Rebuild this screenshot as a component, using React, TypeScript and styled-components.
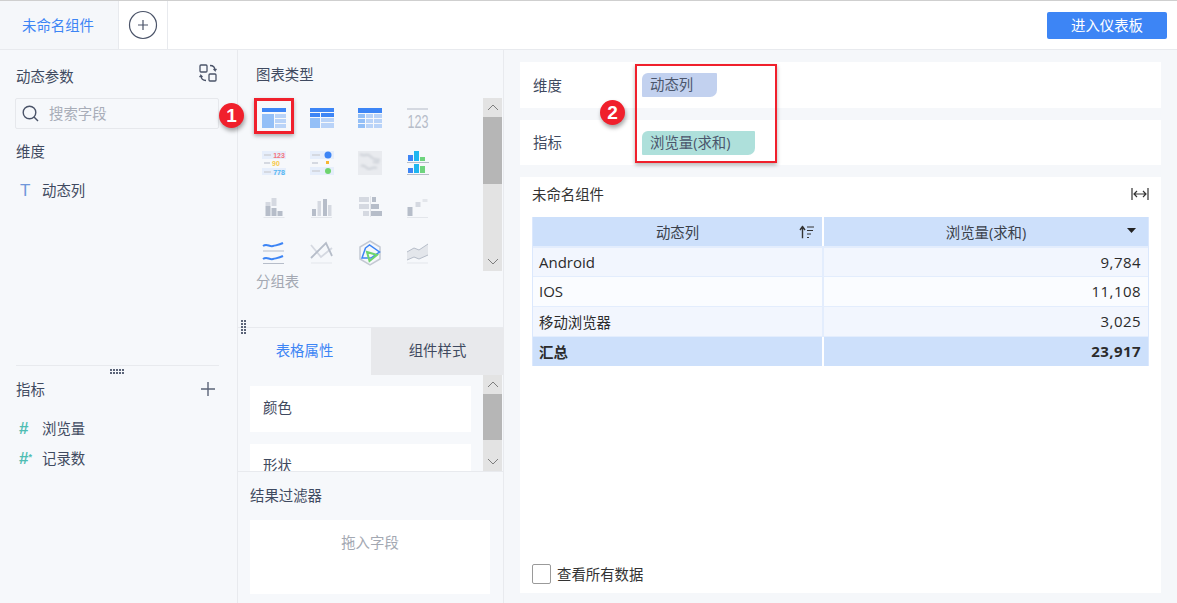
import React from "react";
import styled, { createGlobalStyle } from "styled-components";

const Global = createGlobalStyle`
  html, body { margin: 0; padding: 0; background: #fff; }
  body { font-family: "Open Sans", "Noto Sans CJK SC", sans-serif; color: #3f4a60; font-size: 14.4px; }
  * { box-sizing: border-box; }
`;

const Page = styled.div`position: relative; width: 1177px; height: 603px; overflow: hidden; display: flex; flex-direction: column;`;
const TopBar = styled.header`height: 50px; flex: none; display: flex; align-items: stretch; border-top: 1px solid #cfcfcf; border-bottom: 1px solid #e8eaee; background: #fff;`;
const ActiveTab = styled.div`width: 118px; background: #f5f7fa; color: #3d85f5; display: flex; align-items: center; justify-content: center; padding: 0 2px 2px 0;`;
const PlusTab = styled.div`width: 50px; border-left: 1px solid #e8eaee; border-right: 1px solid #e8eaee; display: flex; align-items: center; justify-content: center;`;
const EnterButton = styled.button`margin: 11px 10px 10px auto; width: 120px; border: 0; border-radius: 2px; background: #3d85f5; color: #fff; font: inherit; padding: 0 0 2px;`;
const Body = styled.div`flex: 1; display: flex; min-height: 0;`;

const LeftPanel = styled.aside`width: 238px; flex: none; background: #f6f8fb; border-right: 1px solid #e8eaee; padding: 0 18px 0 16px; display: flex; flex-direction: column;`;
const PanelHead = styled.div<{ $h: number }>`height: ${p => p.$h}px; flex: none; display: flex; align-items: center; justify-content: space-between; color: #3f4a60; padding-bottom: 2px;`;
const ParamHead = styled(PanelHead)`padding-top: 5px;`;
const SearchBox = styled.div`height: 31px; margin-left: -1px; border: 1px solid #e6e8ec; border-radius: 2px; display: flex; align-items: center; gap: 10px; padding: 0 0 3px 6px; color: #a8adb8; flex: none;`;
const FieldRow = styled.div`height: 30px; flex: none; display: flex; align-items: center; color: #3f4a60; padding-bottom: 2px;`;
const FieldIcon = styled.span<{ $c: string; $bold?: boolean }>`width: 26px; padding: 2px 0 0 ${p => (p.$bold ? 3 : 4)}px; flex: none; color: ${p => p.$c}; font-weight: ${p => (p.$bold ? 700 : 400)}; font-size: 17px; line-height: 1; font-family: "Liberation Sans", sans-serif; white-space: nowrap;`;
const StarMark = styled.small`font-size: 9px; vertical-align: 4px;`;
const Spacer = styled.div<{ $h: number }>`height: ${p => p.$h}px; flex: none;`;
const Divider = styled.div`height: 1px; background: #e8eaee; flex: none;`;
const Dots = styled.div`height: 11px; flex: none; display: flex; align-items: center; justify-content: center;`;

const MiddlePanel = styled.section`width: 266px; flex: none; background: #f6f8fb; border-right: 1px solid #e8eaee; display: flex; flex-direction: column; position: relative;`;
const ChartSection = styled.div`height: 277px; flex: none; padding: 0 1px 0 12px; display: flex; flex-direction: column;`;
const ChartTitle = styled.div`height: 48px; flex: none; display: flex; align-items: center; padding: 0 0 1px 6px; color: #3f4a60;`;
const ChartRow = styled.div`display: flex; justify-content: space-between;`;
const ChartWrap = styled.div`flex: 1; position: relative; width: 100%;`;
const ChartGrid = styled.div`display: grid; grid-template-columns: repeat(4, 48px); grid-auto-rows: 45px; width: 192px; margin-top: -3px;`;
const ChartCell = styled.div`display: flex; align-items: center; justify-content: center;`;
const ChartIconSvg = styled.svg`overflow: visible;`;
const ChartName = styled.div`padding-left: 6px; color: #a3a8b2; margin-top: -5px;`;
const Scrollbar = styled.div<{ $h: number }>`width: 19px; height: ${p => p.$h}px; background: #e3e3e3; flex: none; display: flex; flex-direction: column; justify-content: space-between;`;
const ScrollCap = styled.div`height: 19px; display: flex; align-items: center; justify-content: center; flex: none;`;
const Thumb = styled.div<{ $h: number }>`height: ${p => p.$h}px; background: #b6b6b6; flex: none;`;
const ScrollTrack = styled.div`flex: 1; display: flex; flex-direction: column;`;
const Selected = styled.div`position: absolute; left: 4px; top: 0; width: 40px; height: 36px; border: 3px solid #f0202c; box-shadow: 0 2px 4px rgba(0,0,0,.3);`;
const TabStrip = styled.div`height: 48px; flex: none; display: flex; border-top: 1px solid #e8eaee;`;
const Tab = styled.div<{ $on?: boolean }>`width: 133px; flex: none; display: flex; align-items: center; justify-content: center; padding-bottom: 4px; background: ${p => (p.$on ? "#f6f8fb" : "#e8e9ec")}; color: ${p => (p.$on ? "#3d85f5" : "#3f4a60")};`;
const AttrArea = styled.div`height: 97px; flex: none; display: flex; overflow: hidden; padding-left: 12px; border-bottom: 1px solid #e8eaee;`;
const AttrList = styled.div`width: 221px; flex: none; padding-top: 11px; display: flex; flex-direction: column; gap: 12px;`;
const AttrCard = styled.div`height: 46px; flex: none; background: #fff; display: flex; align-items: center; padding: 0 0 5px 13px; color: #3f4a60;`;
const AttrGap = styled.div`width: 12px; flex: none;`;
const FilterArea = styled.div`flex: 1; padding: 0 12px; display: flex; flex-direction: column;`;
const FilterTitle = styled.div`height: 48px; flex: none; display: flex; align-items: center; padding-bottom: 4px; color: #3f4a60;`;
const DropZone = styled.div`height: 74px; width: 240px; background: #fff; color: #a3a8b2; text-align: center; padding-top: 11px;`;
const GripV = styled.div`position: absolute; left: 3px; top: 270px;`;

const RightPanel = styled.main`flex: 1; background: #f5f7fa; padding: 12px 16px 10px 16px; display: flex; flex-direction: column; gap: 12px;`;
const ShelfCard = styled.div<{ $h: number }>`height: ${p => p.$h}px; flex: none; background: #fff; display: flex; align-items: center; padding-left: 13px; color: #3f4a60;`;
const ShelfLabel = styled.div`width: 109px; flex: none; padding-bottom: 2px;`;
const Pill = styled.div<{ $w: number; $c: string }>`width: ${p => p.$w}px; height: 24px; background: ${p => p.$c}; border-radius: 6px 1px 7px 1px; padding: 0 0 3px 8px; display: flex; align-items: center; color: #4b566c;`;
const MainCard = styled.div`flex: 1; background: #fff; padding: 0 12px; display: flex; flex-direction: column; color: #333;`;
const MainHead = styled.div`height: 40px; flex: none; display: flex; align-items: center; justify-content: space-between; padding-bottom: 7px;`;
const DataTable = styled.div`background: #dbe8fd; padding: 0 1px; display: flex; flex-direction: column; width: 617px;`;
const Row = styled.div<{ $bg: string; $gap: string; $h: number; $bold?: boolean }>`display: grid; grid-template-columns: 289px 1fr; column-gap: 2px; height: ${p => p.$h}px; background: ${p => p.$gap}; font-weight: ${p => (p.$bold ? 700 : 400)}; font-size: 15px; color: #2b2b2b; & > div { background: ${p => p.$bg}; }`;
const RowGap = styled.div<{ $h: number }>`height: ${p => p.$h}px; background: #e3edfd;`;
const Cell = styled.div<{ $right?: boolean; $cjk?: boolean }>`display: flex; align-items: center; padding: 0 7px 1px 6px; font-size: ${p => (p.$cjk ? 14.4 : 15)}px; letter-spacing: ${p => (p.$right ? 0.45 : 0)}px; justify-content: ${p => (p.$right ? "flex-end" : "flex-start")};`;
const HeadCell = styled.div`position: relative; display: flex; align-items: center; justify-content: center; font-size: 14.4px; color: #3a3f4a;`;
const SortIcon = styled.span`position: absolute; right: 8px; top: 50%; transform: translateY(-50%); display: flex;`;
const CheckRow = styled.div`margin-top: auto; height: 29px; flex: none; display: flex; align-items: flex-start; gap: 6px; color: #333;`;
const Check = styled.span`width: 19px; height: 20px; border: 1px solid #9a9a9a; border-radius: 2px; background: #fff; flex: none;`;
const CheckText = styled.span`margin-top: -1px;`;

const Badge = styled.div<{ $x: number; $y: number }>`position: absolute; left: ${p => p.$x}px; top: ${p => p.$y}px; width: 25px; height: 25px; border-radius: 50%; background: #f0202c; color: #fff; font: 700 19px/25px "Liberation Sans", sans-serif; text-align: center; box-shadow: 1px 3px 4px rgba(0,0,0,.35);`;
const RedFrame = styled.div`position: absolute; left: 635px; top: 64px; width: 142px; height: 99px; border: 2px solid #f0202c; box-shadow: 0 2px 4px rgba(0,0,0,.3);`;

const B = "#3d85f5", L = "#93bff7", M = "#b9d3f8", G = "#b6bdc9", G2 = "#d5d9e1", G3 = "#e3e6eb";
const Ico: React.FC<{ children: React.ReactNode }> = ({ children }) => (
  <ChartIconSvg width="26" height="26" viewBox="0 0 26 26" fill="none">{children}</ChartIconSvg>
);
const r = (x: number, y: number, w: number, h: number, c: string) => <rect x={x} y={y} width={w} height={h} fill={c} />;
const SF = "Liberation Sans, sans-serif";

const icons: React.ReactNode[] = [
  <>{r(1,3,24,4,B)}{r(1,9,12,14,L)}{r(14,9,11,4,M)}{r(14,14,11,4,M)}{r(14,19,11,4,M)}</>,
  <>{r(1,3,24,4,B)}{r(1,8,10,4,B)}{r(12,8,13,4,B)}{r(1,13,10,10,L)}{r(12,13,13,4,M)}{r(12,18,13,5,M)}</>,
  <>{r(1,3,24,5,B)}{r(1,9,7,4,L)}{r(9,9,7,4,M)}{r(17,9,8,4,M)}{r(1,14,7,4,L)}{r(9,14,7,4,M)}{r(17,14,8,4,M)}{r(1,19,7,4,L)}{r(9,19,7,4,M)}{r(17,19,8,4,M)}</>,
  <>{r(2,3,21,2,G2)}<text x="2.500" y="23" textLength="21" lengthAdjust="spacingAndGlyphs" fontSize="19" fill={G} fontFamily={SF}>123</text></>,
  <>{r(1,1,24,8,"#e6eefb")}{r(3,4,7,2,G2)}<text x="18" y="8" textAnchor="middle" fontSize="7" fontWeight="700" fill="#f4737e" fontFamily={SF}>123</text>{r(3,12,6,2,G2)}<text x="15" y="16" textAnchor="middle" fontSize="7" fontWeight="700" fill="#f7c948" fontFamily={SF}>90</text>{r(1,18,24,7,"#e6eefb")}{r(3,21,7,2,G2)}<text x="18" y="24.500" textAnchor="middle" fontSize="7" fontWeight="700" fill="#52b5f2" fontFamily={SF}>778</text></>,
  <>{r(1,1,24,8,"#e6eefb")}{r(3,4,8,2,G2)}<circle cx="19" cy="5" r="3.500" fill={B} />{r(3,12,6,2,G2)}{r(17,11,3,3,"#f7b733")}{r(1,17,24,8,"#e6eefb")}{r(3,20,8,2,G2)}<circle cx="19" cy="21" r="3" fill="#6ed46e" /></>,
  <><defs><filter id="blotch"><feGaussianBlur stdDeviation="1" /></filter></defs><rect x="1" y="1" width="24" height="24" fill="#e9ebef" /><g filter="url(#blotch)" stroke="#cdd1d8" strokeWidth="2"><path d="M3 4c5 4 7-2 10 2s6 3 10 4" /><path d="M4 16c4-2 5 3 8 3s4-3 8-1" /><path d="M16 12c3 0 4 1 6 0" /></g></>,
  <>{r(3,5,5,6,B)}{r(9,1,5,10,"#1fb6f0")}{r(15,7,5,4,"#6ed47e")}{r(2,12,22,1,G)}{r(3,18,5,5,B)}{r(9,14,5,9,"#1fb6f0")}{r(15,16,5,7,"#6ed47e")}{r(2,24,22,1,G)}</>,
  <>{r(4.500,7,5,4,G2)}{r(4.500,11,5,10,G)}{r(10.500,3,5,8,G2)}{r(10.500,13,5,8,G)}{r(16.500,16,5,5,G)}{r(2.500,22,21,1,G3)}</>,
  <>{r(3,14,4,7,G)}{r(8.500,6,3.500,15,G2)}{r(14,4,4,17,G)}{r(19,10,3.500,11,G2)}{r(2,22,21,1,G3)}</>,
  <>{r(2,2,10,5,G2)}{r(15,2,4,5,G)}{r(2,9,10,5,G2)}{r(14,9,8,5,G)}{r(6,16,6,5,G2)}{r(14,16,11,5,G)}{r(13,1,1,21,G3)}</>,
  <>{r(2.500,12,5,9,G)}{r(10.500,7,5,5,G2)}{r(17.500,4,5,3,G3)}{r(2,22,21,1,G3)}</>,
  <><path d="M2 6c4-3 6 1 10 0s6-1 10-3" stroke={B} strokeWidth="2" /><path d="M2 11h21" stroke={G} strokeWidth="1" /><path d="M2 19c4-3 6 1 10 0s6-1 10-3" stroke={B} strokeWidth="2" /><path d="M2 23.500h21" stroke={G} strokeWidth="1" /></>,
  <><path d="M2 5l10 12 11-9" stroke={G2} strokeWidth="1.800" /><path d="M2 18L17 3l6 13" stroke={G} strokeWidth="1.800" /><path d="M2 23h21" stroke={G3} strokeWidth="1" /></>,
  <><path d="M13 1l10 6v12l-10 6-10-6V7z" stroke="#c4c9d3" strokeWidth="1.500" /><path d="M8.500 8l4-3 10 7-8.500 6H5z" stroke={B} strokeWidth="1.500" /><path d="M10 12l10 3-7.500 6z" stroke="#6ed46e" strokeWidth="2" /></>,
  <><path d="M2 12l7-4 5 2 9-6v11l-9 4-5-2-7 3z" fill={G3} /><path d="M2 12l7-4 5 2 9-6M2 20l7-3 5 2 9-4" stroke={G} strokeWidth="1" /><path d="M2 23h21" stroke={G3} strokeWidth="1" /></>,
];

const Chevron: React.FC<{ up?: boolean }> = ({ up }) => (
  <svg width="12" height="7" viewBox="0 0 12 7" fill="none"><path d={up ? "M1 6l5-5 5 5" : "M1 1l5 5 5-5"} stroke="#7d7d7d" strokeWidth="1" /></svg>
);
const VBar: React.FC<{ h: number; thumb: number }> = ({ h, thumb }) => (
  <Scrollbar $h={h}>
    <ScrollTrack>
      <ScrollCap><Chevron up /></ScrollCap>
      <Thumb $h={thumb} />
    </ScrollTrack>
    <ScrollCap><Chevron /></ScrollCap>
  </Scrollbar>
);
const GripDots: React.FC<{ w: number; h: number }> = ({ w, h }) => (
  <svg width={w * 3} height={h * 3} viewBox={`0 0 ${w * 3} ${h * 3}`}>
    {Array.from({ length: w * h }, (_, i) => (
      <rect key={i} x={(i % w) * 3} y={Math.floor(i / w) * 3} width="2" height="2" fill="#5b6478" />
    ))}
  </svg>
);

export default function App() {
  return (
    <Page>
      <Global />
      <TopBar>
        <ActiveTab>未命名组件</ActiveTab>
        <PlusTab>
          <svg width="30" height="30" viewBox="0 0 30 30" fill="none">
            <circle cx="15" cy="15" r="13.500" stroke="#4a5368" strokeWidth="1.200" />
            <path d="M15 10v10M10 15h10" stroke="#4a5368" strokeWidth="1.200" />
          </svg>
        </PlusTab>
        <EnterButton>进入仪表板</EnterButton>
      </TopBar>
      <Body>
        <LeftPanel>
          <ParamHead $h={48}>
            <span>动态参数</span>
            <svg width="18" height="18" viewBox="0 0 18 18" fill="none" stroke="#4a5368" strokeWidth="1.300" style={{ marginRight: 2, marginTop: -5 }}>
              <rect x="1" y="1" width="7" height="7" rx="1" />
              <rect x="10" y="10" width="7" height="7" rx="1" />
              <path d="M11 1.500c3 0 5 1.500 5 5l-1.500-1.500M16 6.500l1.500-1.500M7 16.500c-3 0-5-1.500-5-5l1.500 1.500M2 11.500L.5 13" />
            </svg>
          </ParamHead>
          <SearchBox>
            <svg width="17" height="17" viewBox="0 0 17 17" fill="none" stroke="#4a5368" strokeWidth="1.400" style={{ marginTop: 2 }}>
              <circle cx="7.500" cy="7.500" r="6.300" />
              <path d="M12 12l4 4" />
            </svg>
            <span>搜索字段</span>
          </SearchBox>
          <PanelHead $h={44}><span>维度</span></PanelHead>
          <Spacer $h={2} />
          <FieldRow><FieldIcon $c="#7097da">T</FieldIcon>动态列</FieldRow>
          <Spacer $h={160} />
          <Divider />
          <Dots><GripDots w={5} h={2} /></Dots>
          <PanelHead $h={24}>
            <span>指标</span>
            <svg width="16" height="16" viewBox="0 0 16 16" fill="none" stroke="#5b6478" strokeWidth="1.400" style={{ marginRight: 3, marginTop: 2 }}>
              <path d="M8 1v14M1 8h14" />
            </svg>
          </PanelHead>
          <Spacer $h={12} />
          <FieldRow><FieldIcon $c="#4fbdb3" $bold>#</FieldIcon>浏览量</FieldRow>
          <FieldRow><FieldIcon $c="#4fbdb3" $bold>#<StarMark>*</StarMark></FieldIcon>记录数</FieldRow>
        </LeftPanel>
        <MiddlePanel>
          <GripV><GripDots w={2} h={5} /></GripV>
          <ChartSection>
            <ChartTitle>图表类型</ChartTitle>
            <ChartRow>
              <ChartWrap>
                <ChartGrid>
                  {icons.map((ic, i) => (
                    <ChartCell key={i}>
                      <Ico>{ic}</Ico>
                    </ChartCell>
                  ))}
                </ChartGrid>
                <Selected />
                <ChartName>分组表</ChartName>
              </ChartWrap>
              <VBar h={173} thumb={67} />
            </ChartRow>
          </ChartSection>
          <TabStrip>
            <Tab $on>表格属性</Tab>
            <Tab>组件样式</Tab>
          </TabStrip>
          <AttrArea>
            <AttrList>
              <AttrCard>颜色</AttrCard>
              <AttrCard>形状</AttrCard>
            </AttrList>
            <AttrGap />
            <VBar h={96} thumb={46} />
          </AttrArea>
          <FilterArea>
            <FilterTitle>结果过滤器</FilterTitle>
            <DropZone>拖入字段</DropZone>
          </FilterArea>
        </MiddlePanel>
        <RightPanel>
          <ShelfCard $h={46}>
            <ShelfLabel>维度</ShelfLabel>
            <Pill $w={75} $c="#c2d1ef">动态列</Pill>
          </ShelfCard>
          <ShelfCard $h={45}>
            <ShelfLabel>指标</ShelfLabel>
            <Pill $w={113} $c="#aee0db">浏览量(求和)</Pill>
          </ShelfCard>
          <MainCard>
            <MainHead>
              <span>未命名组件</span>
              <svg width="18" height="14" viewBox="0 0 18 14" fill="none" stroke="#333" strokeWidth="1.200">
                <path d="M1 1v12M17 1v12M3 7h12M6 4L3 7l3 3M12 4l3 3-3 3" />
              </svg>
            </MainHead>
            <DataTable>
              <Row $bg="#cde0fb" $gap="#fff" $h={29}>
                <HeadCell>
                  动态列
                  <SortIcon>
                    <svg width="15" height="13" viewBox="0 0 15 13" fill="none" stroke="#333">
                      <path d="M3.500 13V2M1 4.500L3.500 1 6 4.500" strokeWidth="1.400" />
                      <path d="M8 1.500h7M8 5h6M8 8.500h4M8 12h2" strokeWidth="1" />
                    </svg>
                  </SortIcon>
                </HeadCell>
                <HeadCell>
                  浏览量(求和)
                  <SortIcon>
                    <svg width="9" height="5" viewBox="0 0 9 5" style={{ marginRight: 4, marginTop: -3 }}><path d="M0 0h9L4.500 5z" fill="#222" /></svg>
                  </SortIcon>
                </HeadCell>
              </Row>
              <RowGap $h={2} />
              <Row $bg="#f2f6fe" $gap="#e3edfd" $h={28}><Cell>Android</Cell><Cell $right>9,784</Cell></Row>
              <RowGap $h={1} />
              <Row $bg="#fafcff" $gap="#e3edfd" $h={29}><Cell>IOS</Cell><Cell $right>11,108</Cell></Row>
              <RowGap $h={1} />
              <Row $bg="#f2f6fe" $gap="#e3edfd" $h={29}><Cell $cjk>移动浏览器</Cell><Cell $right>3,025</Cell></Row>
              <RowGap $h={1} />
              <Row $bg="#cde0fb" $gap="#fff" $h={29} $bold><Cell $cjk>汇总</Cell><Cell $right>23,917</Cell></Row>
            </DataTable>
            <CheckRow><Check /><CheckText>查看所有数据</CheckText></CheckRow>
          </MainCard>
        </RightPanel>
      </Body>
      <RedFrame />
      <Badge $x={219} $y={103}>1</Badge>
      <Badge $x={600} $y={100}>2</Badge>
    </Page>
  );
}
